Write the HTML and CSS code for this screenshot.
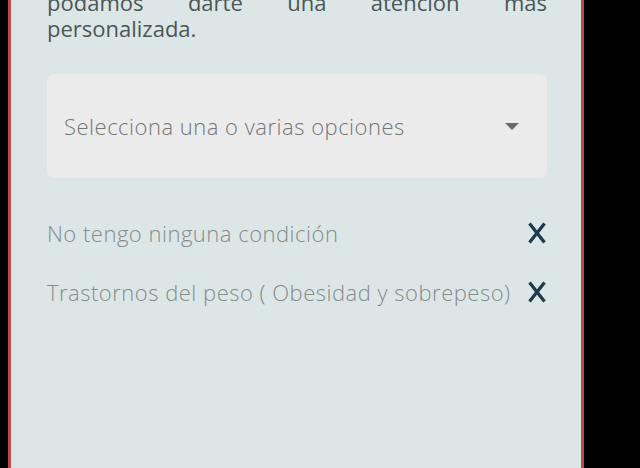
FILE: index.html
```html
<!DOCTYPE html>
<html lang="es">
<head>
<meta charset="utf-8">
<link rel="stylesheet" href="styles.css">
</head>
<body>
<div class="screen">
  <div class="panel">
    <div class="intro">
      <p class="intro-line intro-full">podamos darte una atención más</p>
      <p class="intro-line">personalizada.</p>
    </div>
    <div class="select">
      <span class="placeholder">Selecciona una o varias opciones</span>
      <span class="caret"></span>
    </div>
    <ul class="chips">
      <li class="chip">
        <span class="chip-label">No tengo ninguna condición</span>
        <svg class="chip-x" viewBox="0 0 20 22" width="20" height="22"><path d="M2.5 1.5 L17.5 20.5 M17.5 1.5 L2.5 20.5" stroke="#1e3a4c" stroke-width="3.3" fill="none"/></svg>
      </li>
      <li class="chip">
        <span class="chip-label">Trastornos del peso ( Obesidad y sobrepeso)</span>
        <svg class="chip-x" viewBox="0 0 20 22" width="20" height="22"><path d="M2.5 1.5 L17.5 20.5 M17.5 1.5 L2.5 20.5" stroke="#1e3a4c" stroke-width="3.3" fill="none"/></svg>
      </li>
    </ul>
  </div>
</div>
</body>
</html>
```

FILE: styles.css
```css
html, body {
  margin: 0;
  padding: 0;
  background: #000;
  height: 100%;
  overflow: hidden;
}
.screen {
  display: flex;
  height: 468px;
  padding-left: 8px;
}
.panel {
  height: 100%;
  background: #dce6e6;
  border-left: 3px solid #c0474c;
  border-right: 3px solid #c0474c;
  padding: 0 34px 0 36px;
  box-sizing: content-box;
  width: 500px;
  font-family: "Open Sans", Lato, sans-serif;
  font-weight: 300;
}
.intro {
  margin-top: -11px;
}
.intro-line {
  margin: 0;
  font-size: 22px;
  line-height: 26px;
  color: #4b5656;
  font-weight: 400;
}
.intro-full {
  text-align: justify;
  text-align-last: justify;
}
.select {
  margin-top: 33px;
  height: 104px;
  background: #ebebeb;
  border-radius: 8px;
  display: flex;
  align-items: center;
  justify-content: space-between;
  padding: 0 28px 0 17px;
}
.placeholder {
  font-size: 22px;
  letter-spacing: 0.5px;
  color: #767676;
}
.caret {
  width: 0;
  height: 0;
  border-left: 7px solid transparent;
  border-right: 7px solid transparent;
  border-top: 7px solid #6a6a6a;
}
.chips {
  list-style: none;
  margin: 0;
  padding: 0;
  margin-top: 40px;
}
.chip {
  display: flex;
  align-items: center;
  justify-content: space-between;
  height: 30px;
  margin-bottom: 29px;
}
.chip-label {
  font-size: 22px;
  letter-spacing: 0.5px;
  color: #868b8b;
}
```
